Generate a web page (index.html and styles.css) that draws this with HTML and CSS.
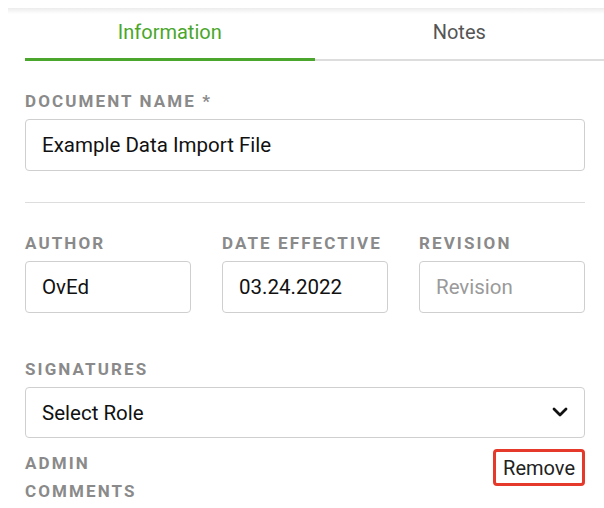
FILE: index.html
```html
<!DOCTYPE html>
<html lang="en">
<head>
    <meta charset="UTF-8">
    <meta name="viewport" content="width=device-width, initial-scale=1.0">
    <title>Document Details</title>
    <link rel="stylesheet" href="styles.css">
</head>
<body>
    <div class="card">
        <div class="tabs">
            <div class="tab active">Information</div>
            <div class="tab">Notes</div>
        </div>

        <form class="form">
            <label class="field-label" for="docName">Document Name *</label>
            <input class="text-input" type="text" id="docName" value="Example Data Import File">

            <hr class="divider">

            <div class="row">
                <div class="col">
                    <label class="field-label" for="author">Author</label>
                    <input class="text-input" type="text" id="author" value="OvEd">
                </div>
                <div class="col">
                    <label class="field-label" for="dateEffective">Date Effective</label>
                    <input class="text-input" type="text" id="dateEffective" value="03.24.2022">
                </div>
                <div class="col">
                    <label class="field-label" for="revision">Revision</label>
                    <input class="text-input" type="text" id="revision" placeholder="Revision">
                </div>
            </div>

            <label class="field-label signatures-label" for="role">Signatures</label>
            <div class="select-wrap">
                <select class="select-input" id="role">
                    <option>Select Role</option>
                </select>
                <svg class="chevron" width="16" height="10" viewBox="0 0 16 10">
                    <path d="M2 2 L8 8 L14 2" fill="none" stroke="#111" stroke-width="2.8" stroke-linecap="round" stroke-linejoin="round"/>
                </svg>
            </div>

            <div class="admin-row">
                <label class="field-label admin-label">Admin Comments</label>
                <button type="button" class="remove-btn">Remove</button>
            </div>
        </form>
    </div>
</body>
</html>
```

FILE: styles.css
```css
body {
    margin: 0;
    font-family: 'Roboto', 'Liberation Sans', sans-serif;
    background: #fff;
    color: #111;
    overflow: hidden;
}
.card {
    margin: 8px 0 0 8px;
    padding: 2px 19px 0 17px;
    background: linear-gradient(to bottom, #ececec, #fff 6px);
}
.tabs {
    display: flex;
    margin-right: -19px;
}
.tab {
    flex: 1;
    text-align: center;
    font-size: 20px;
    line-height: 24px;
    padding: 10px 0 15px;
    color: #555;
    border-bottom: 2px solid #ddd;
}
.tab.active {
    color: #4aa62c;
    padding-bottom: 14px;
    border-bottom: 3px solid #4aa62c;
}
.form {
    margin-top: 26px;
}
.field-label {
    display: block;
    font-size: 17px;
    font-weight: 700;
    line-height: 28px;
    letter-spacing: 2.1px;
    text-transform: uppercase;
    color: #8a8a8a;
    margin-bottom: 4px;
}
.text-input,
.select-input {
    display: block;
    width: 100%;
    height: 52px;
    box-sizing: border-box;
    border: 1px solid #cfcfcf;
    border-radius: 4px;
    padding: 0 16px;
    font-family: 'Roboto', 'Liberation Sans', sans-serif;
    font-size: 20.5px;
    color: #111;
    background: #fff;
    margin: 0;
}
.text-input::placeholder {
    color: #9a9a9a;
}
.divider {
    border: none;
    border-top: 1px solid #ddd;
    margin: 31px 0 26px;
}
.row {
    display: grid;
    grid-template-columns: repeat(3, 1fr);
    column-gap: 31px;
}
.signatures-label {
    margin-top: 42px;
}
.select-wrap {
    position: relative;
}
.select-input {
    appearance: none;
    -webkit-appearance: none;
    height: 51px;
}
.chevron {
    position: absolute;
    right: 17px;
    top: 20px;
}
.admin-row {
    display: flex;
    justify-content: space-between;
    align-items: flex-start;
    margin-top: 11px;
}
.admin-label {
    max-width: 150px;
    margin: 0;
}
.remove-btn {
    height: 37px;
    padding: 0 7px;
    border: 3px solid #e5392b;
    border-radius: 4px;
    background: #fff;
    font-family: 'Roboto', 'Liberation Sans', sans-serif;
    font-size: 20px;
    color: #222;
    cursor: pointer;
}
```
